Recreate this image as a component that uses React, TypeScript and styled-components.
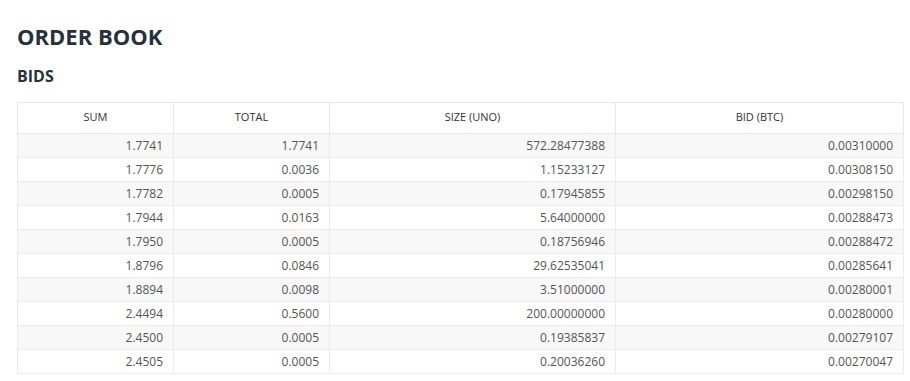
import React from "react";
import styled, { createGlobalStyle } from "styled-components";

const GlobalStyle = createGlobalStyle`
  html, body { margin: 0; padding: 0; background: #fff; }
  body { font-family: "Open Sans", "Liberation Sans", sans-serif; }
`;

const Page = styled.div`
  padding: 21px 7px 0 17px;
`;

const Title = styled.h1`
  margin: 0;
  font-size: 22px;
  line-height: 30px;
  font-weight: 700;
  color: #26313b;
`;

const SubTitle = styled.h2`
  margin: 14px 0 15px 0;
  font-size: 16px;
  line-height: 22px;
  font-weight: 700;
  color: #26313b;
`;

const Table = styled.table`
  width: 886px;
  border-collapse: collapse;
  table-layout: fixed;
  font-size: 12px;
`;

const HeadCell = styled.th<{ $w: number }>`
  width: ${(p) => p.$w}px;
  height: 31px;
  padding: 0 10px 3px;
  border: 1px solid #e8e8e8;
  font-size: 11px;
  font-weight: 400;
  color: #333;
  text-align: center;
  box-sizing: border-box;
`;

const Row = styled.tr<{ $odd: boolean }>`
  background: ${(p) => (p.$odd ? "#f8f8f8" : "#fff")};
`;

const Cell = styled.td`
  height: 24px;
  padding: 0 10px;
  border: 1px solid #ececec;
  text-align: right;
  color: #555;
  box-sizing: border-box;
`;

const rows: [string, string, string, string][] = [
  ["1.7741", "1.7741", "572.28477388", "0.00310000"],
  ["1.7776", "0.0036", "1.15233127", "0.00308150"],
  ["1.7782", "0.0005", "0.17945855", "0.00298150"],
  ["1.7944", "0.0163", "5.64000000", "0.00288473"],
  ["1.7950", "0.0005", "0.18756946", "0.00288472"],
  ["1.8796", "0.0846", "29.62535041", "0.00285641"],
  ["1.8894", "0.0098", "3.51000000", "0.00280001"],
  ["2.4494", "0.5600", "200.00000000", "0.00280000"],
  ["2.4500", "0.0005", "0.19385837", "0.00279107"],
  ["2.4505", "0.0005", "0.20036260", "0.00270047"],
];

const cols: [string, number][] = [
  ["SUM", 156],
  ["TOTAL", 156],
  ["SIZE (UNO)", 286],
  ["BID (BTC)", 288],
];

export default function App() {
  return (
    <>
      <GlobalStyle />
      <Page>
        <Title>ORDER BOOK</Title>
        <SubTitle>BIDS</SubTitle>
        <Table>
          <thead>
            <tr>
              {cols.map(([label, w]) => (
                <HeadCell key={label} $w={w}>
                  {label}
                </HeadCell>
              ))}
            </tr>
          </thead>
          <tbody>
            {rows.map((r, i) => (
              <Row key={i} $odd={i % 2 === 0}>
                {r.map((v, j) => (
                  <Cell key={j}>{v}</Cell>
                ))}
              </Row>
            ))}
          </tbody>
        </Table>
      </Page>
    </>
  );
}
